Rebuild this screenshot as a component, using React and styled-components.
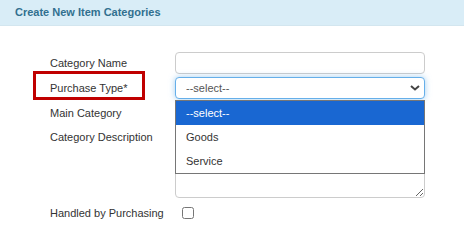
import React from "react";
import styled, { createGlobalStyle } from "styled-components";

const GlobalStyle = createGlobalStyle`
  body {
    margin: 0;
    background: #fff;
    font-family: "Liberation Sans", Arial, sans-serif;
    font-size: 11px;
    color: #333;
  }
`;

const Panel = styled.div`
  width: 464px;
  height: 238px;
  overflow: hidden;
`;

const Heading = styled.div`
  height: 26px;
  box-sizing: border-box;
  padding: 0 15px;
  line-height: 25px;
  background: #d9edf7;
  border-bottom: 1px solid #d3e6ef;
  color: #31708f;
  font-size: 11px;
  font-weight: bold;
`;

const Form = styled.div`
  padding: 26px 0 0 50px;
  display: flex;
  flex-direction: column;
  gap: 3px;
`;

const Row = styled.div`
  display: flex;
  align-items: ${(p) => (p.$top ? "flex-start" : "center")};
  margin-top: ${(p) => p.$gap || 0}px;
`;

const Label = styled.label`
  position: relative;
  width: 125px;
  flex: none;
  padding-top: ${(p) => (p.$top ? "4px" : "0")};
  color: #333;

  ${(p) =>
    p.$marked &&
    `
    &::before {
      content: "";
      position: absolute;
      left: -17px;
      top: -11px;
      width: 106px;
      height: 23px;
      border: 3px solid #c00000;
    }
  `}
`;

const Field = styled.div`
  position: relative;
  width: 250px;
`;

const TextInput = styled.input`
  display: block;
  box-sizing: border-box;
  width: 250px;
  height: 22px;
  padding: 0 10px;
  border: 1px solid #ccc;
  border-radius: 4px;
  font: inherit;
`;

const Select = styled.select`
  display: block;
  box-sizing: border-box;
  width: 250px;
  height: 22px;
  padding: 0 10px;
  appearance: none;
  background: #fff;
  border: 1px solid ${(p) => (p.$focused ? "#66afe9" : "#ccc")};
  border-radius: 4px;
  box-shadow: ${(p) =>
    p.$focused ? "0 0 6px rgba(102, 175, 233, 0.6)" : "none"};
  font: inherit;
  color: #555;
  outline: none;
`;

const Chevron = styled.svg`
  position: absolute;
  right: 5px;
  top: 8px;
  pointer-events: none;
`;

const Menu = styled.ul`
  position: absolute;
  left: 0;
  top: 23px;
  z-index: 2;
  width: 250px;
  box-sizing: border-box;
  margin: 0;
  padding: 0;
  list-style: none;
  background: #fff;
  border: 1px solid #767676;
`;

const Option = styled.li`
  height: 24px;
  line-height: 24px;
  padding: 0 10px;
  background: ${(p) => (p.$active ? "#1967d2" : "#fff")};
  color: ${(p) => (p.$active ? "#fff" : "#333")};
`;

const TextArea = styled.textarea`
  display: block;
  box-sizing: border-box;
  width: 250px;
  height: 71px;
  border: 1px solid #ccc;
  border-radius: 4px;
  font: inherit;
`;

const Check = styled.input`
  width: 12px;
  height: 12px;
  margin: 0 0 0 7px;
`;

export default function App() {
  return (
    <Panel>
      <GlobalStyle />
      <Heading>Create New Item Categories</Heading>
      <Form>
        <Row>
          <Label>Category Name</Label>
          <Field>
            <TextInput type="text" />
          </Field>
        </Row>
        <Row>
          <Label $marked>Purchase Type*</Label>
          <Field>
            <Select $focused defaultValue="">
              <option value="">--select--</option>
              <option>Goods</option>
              <option>Service</option>
            </Select>
            <Chevron width="10" height="6" viewBox="0 0 10 6">
              <path
                d="M1 1 L5 4.5 L9 1"
                fill="none"
                stroke="#444"
                strokeWidth="2"
              />
            </Chevron>
            <Menu>
              <Option $active>--select--</Option>
              <Option>Goods</Option>
              <Option>Service</Option>
            </Menu>
          </Field>
        </Row>
        <Row>
          <Label>Main Category</Label>
          <Field>
            <Select defaultValue="">
              <option value="">--select--</option>
            </Select>
          </Field>
        </Row>
        <Row $top>
          <Label $top>Category Description</Label>
          <Field>
            <TextArea />
          </Field>
        </Row>
        <Row $gap={6}>
          <Label>Handled by Purchasing</Label>
          <Check type="checkbox" />
        </Row>
      </Form>
    </Panel>
  );
}
